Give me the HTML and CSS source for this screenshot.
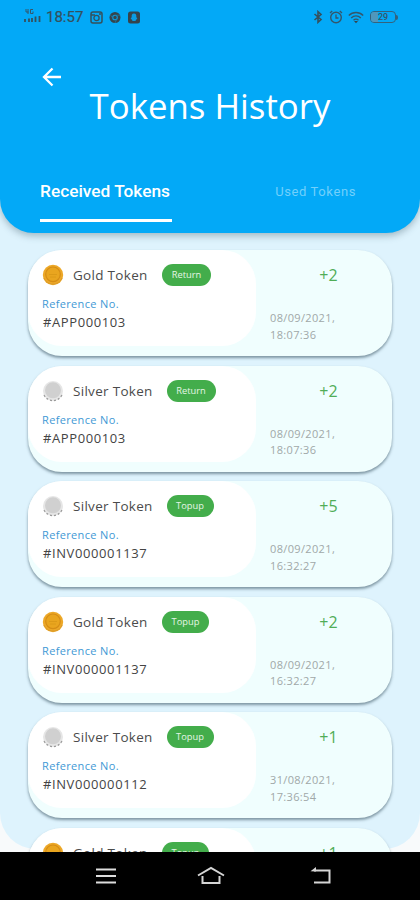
FILE: index.html
```
<!DOCTYPE html>
<html lang="en">
<head>
<meta charset="utf-8">
<title>Tokens History</title>
<link rel="stylesheet" href="styles.css">
</head>
<body>
<svg width="0" height="0" class="defs">
  <symbol id="gold" viewBox="0 0 22 22"><circle cx="11" cy="11" r="10.2" fill="#eda827"/><circle cx="11" cy="10.3" r="7.3" fill="#e9a51f" stroke="#d58d16" stroke-width="1.2"/><path d="M2 14c3 8 15 8 18 0" fill="none" stroke="#d99a2b" stroke-width="1"/><path d="M7 10.5h8M8 13h6" stroke="#dc9a18"/></symbol>
  <symbol id="silver" viewBox="0 0 22 22"><circle cx="11" cy="11" r="10" fill="#e6e6e6"/><circle cx="11" cy="10.3" r="8" fill="#d0d0d0"/><path d="M2 15c4 7.500 14 7.500 18 0" fill="none" stroke="#999" stroke-width="1.200" stroke-dasharray="2 2"/></symbol>
</svg>
<div class="screen">
  <header class="header">
    <div class="status">
      <svg class="signal" width="18" height="16" viewBox="0 0 18 16"><path d="M2 1v3h2.500M4 1v5M6.500 1.500h2.500M6.500 1.500v4h2.500v-2" fill="none" stroke="#35566a"/><path d="M1 11v3M5 10.500v3.500M8 10v4M11.500 8.500V14M15.500 8v6" stroke="#35505c" stroke-width="1.800"/></svg>
      <span class="time">18:57</span>
      <svg class="s1" width="13" height="13" viewBox="0 0 13 13"><rect x="1" y="1" width="11" height="11" rx="2" fill="none" stroke="#35505c" stroke-width="1.500"/><path d="M1 4h4M9 3h2" stroke="#35505c" stroke-width="1.500"/><circle cx="6.500" cy="7" r="2.600" fill="none" stroke="#35505c" stroke-width="1.300"/></svg>
      <svg class="s2" width="12" height="13" viewBox="0 0 12 13"><circle cx="6" cy="6.500" r="5.500" fill="#35444c"/><circle cx="6" cy="6.500" r="2.300" fill="#35444c" stroke="#0a9bdf" stroke-width="1.100"/><path d="M6 4.200h5M4 7.500 1.500 4M8 7.500 6 12" stroke="#1b7ca9" stroke-width=".7"/></svg>
      <svg class="s3" width="12" height="13" viewBox="0 0 12 13"><rect y=".5" width="12" height="12" rx="2.500" fill="#35444c"/><path d="M6 2.500c-2 0-2.500 1.500-2.300 3.500L2.600 8l1.300.5L4.500 10h3l.6-1.500L9.400 8 8.300 6C8.500 4 8 2.500 6 2.500Z" fill="#0a9ce3"/></svg>
      <span class="grow"></span>
      <svg class="bt" width="10" height="14" viewBox="0 0 10 14"><path d="m1.500 4 6.500 5.500-3 2.800V1.700l3 2.800L1.500 10" fill="none" stroke="#35505c" stroke-width="1.600"/></svg>
      <svg class="alarm" width="14" height="14" viewBox="0 0 14 14"><circle cx="7" cy="7.500" r="5.300" fill="none" stroke="#35566a" stroke-width="1.400"/><path d="M7 4.500V8h2.500M1 3l2.200-2M13 3l-2.200-2" fill="none" stroke="#35566a" stroke-width="1.300"/></svg>
      <svg class="wifi" width="16" height="13" viewBox="0 0 16 13"><path d="M.8 4.500c4-4 10.400-4 14.400 0M3.200 7c2.800-2.800 6.800-2.800 9.600 0M5.500 9.300c1.500-1.400 3.500-1.400 5 0" fill="none" stroke="#35566a" stroke-width="1.400"/><path d="m6 10 2 2.300 2-2.300Z" fill="#35444c"/></svg>
      <span class="battery"><i></i><b>29</b></span><span class="nub"></span>
    </div>
    <svg class="back" width="20" height="20" viewBox="0 0 20 20"><path d="M19 10H2M10.500 1.500 2 10l8.500 8.500" fill="none" stroke="#fff" stroke-width="2.300"/></svg>
    <h1>Tokens History</h1>
    <nav class="tabs"><span class="tab active">Received Tokens</span><span class="tab idle">Used Tokens</span></nav>
  </header>
  <main class="list">
    <article class="card"><section class="info"><div class="row"><svg class="coin"><use href="#gold"/></svg><span class="name gold-name">Gold Token</span><span class="pill return">Return</span></div><div class="label">Reference No.</div><div class="ref">#APP000103</div></section><aside class="side"><div class="amount">+2</div><div class="date">08/09/2021,<br>18:07:36</div></aside></article>
    <article class="card"><section class="info"><div class="row"><svg class="coin"><use href="#silver"/></svg><span class="name">Silver Token</span><span class="pill return">Return</span></div><div class="label">Reference No.</div><div class="ref">#APP000103</div></section><aside class="side"><div class="amount">+2</div><div class="date">08/09/2021,<br>18:07:36</div></aside></article>
    <article class="card"><section class="info"><div class="row"><svg class="coin"><use href="#silver"/></svg><span class="name">Silver Token</span><span class="pill">Topup</span></div><div class="label">Reference No.</div><div class="ref">#INV000001137</div></section><aside class="side"><div class="amount">+5</div><div class="date">08/09/2021,<br>16:32:27</div></aside></article>
    <article class="card"><section class="info"><div class="row"><svg class="coin"><use href="#gold"/></svg><span class="name gold-name">Gold Token</span><span class="pill">Topup</span></div><div class="label">Reference No.</div><div class="ref">#INV000001137</div></section><aside class="side"><div class="amount">+2</div><div class="date">08/09/2021,<br>16:32:27</div></aside></article>
    <article class="card"><section class="info"><div class="row"><svg class="coin"><use href="#silver"/></svg><span class="name">Silver Token</span><span class="pill">Topup</span></div><div class="label">Reference No.</div><div class="ref">#INV000000112</div></section><aside class="side"><div class="amount">+1</div><div class="date">31/08/2021,<br>17:36:54</div></aside></article>
    <article class="card"><section class="info"><div class="row"><svg class="coin"><use href="#gold"/></svg><span class="name gold-name">Gold Token</span><span class="pill">Topup</span></div></section><aside class="side"><div class="amount">+1</div></aside></article>
  </main>
  <footer class="navbar">
    <svg width="22" height="20" viewBox="0 0 22 20"><path d="M1 3.500h20M1 10h20M1 16.500h20" stroke="#ddd" stroke-width="2.200"/></svg>
    <svg width="30" height="20" viewBox="0 0 30 20"><path d="M2 9.500 15 2l13 7.500M6.500 10v7h17v-7" fill="none" stroke="#d5d5d5" stroke-width="2"/></svg>
    <svg width="22" height="20" viewBox="0 0 22 20"><path d="M4 4.500h15.500v12H4" fill="none" stroke="#d5d5d5" stroke-width="2"/><path d="M.5 5.300 6 1v4.500Z" fill="#d5d5d5"/></svg>
  </footer>
</div>
</body>
</html>
```
FILE: styles.css
```
* { box-sizing: border-box; }
body { margin: 0; font-family: "Open Sans", "Noto Sans", sans-serif; }
.defs { display: block; }
.screen { width: 420px; height: 900px; overflow: hidden; display: flex; flex-direction: column; background: #f8fafb; }
svg { display: block; flex: none; }
.header { position: relative; z-index: 1; height: 233px; flex: none; background: #03a9f7; border-radius: 0 0 34px 34px; box-shadow: 0 3px 7px rgba(70,100,115,.4); }
.status { display: flex; align-items: center; height: 34px; padding: 0 22px 0 24px; }
.signal { margin-top: -3px; }
.time { font: 400 15px/18px Roboto, sans-serif; color: #35505c; width: 38px; margin-left: 4px; -webkit-text-stroke: .2px #35505c; }
.s1 { margin-left: 6px; }
.s2 { margin-left: 6px; }
.s3 { margin-left: 7px; }
.grow { flex: 1; }
.alarm { margin-left: 6px; }
.wifi { margin-left: 5px; }
.battery { margin-left: 6px; width: 26px; height: 12px; border: 1px solid #35627c; border-radius: 4px; display: flex; align-items: center; overflow: hidden; }
.battery i { width: 7px; height: 10px; background: #5097bc; }
.battery b { font: 500 9px/10px Roboto, sans-serif; color: #35566a; }
.nub { width: 2px; height: 5px; background: #35627c; border-radius: 0 2px 2px 0; }
.back { margin: 33px 0 0 42px; }
h1 { height: 50px; margin: -6px 0 0; font-size: 34.800px; line-height: 50px; font-weight: 400; color: #fff; text-align: center; white-space: nowrap; }
.tabs { display: flex; justify-content: space-between; margin: 49px 64px 0 40px; font-family: Roboto, sans-serif; }
.tab { height: 42px; line-height: 23px; white-space: nowrap; }
.active { width: 132px; font-size: 17.300px; font-weight: 500; color: #fff; border-bottom: 3px solid #fff; }
.idle { font-size: 13px; letter-spacing: .6px; color: #72d0fb; }
.list { height: 650px; margin-top: -34px; flex: none; background: #def3fd; border-radius: 0 0 36px 36px; padding: 51px 28px 0; display: flex; flex-direction: column; gap: 9.500px; }
.card { height: 106px; flex: none; display: flex; border-radius: 34px; background: #f0fefe; box-shadow: 0 2px 3px rgba(65,90,105,.62); }
.info { width: 228px; height: 96px; padding: 14px 0 0 14px; background: #fff; border-radius: 34px; white-space: nowrap; }
.row { display: flex; align-items: center; height: 22px; }
.coin { width: 22px; height: 22px; }
.name { width: 93.500px; margin-left: 9px; font-size: 13.500px; line-height: 22px; letter-spacing: .3px; color: #4b4b4b; }
.gold-name { width: 89px; }
.pill { width: 47px; height: 22px; border-radius: 11px; background: #43ad4b; color: #e5f6e6; text-align: center; font-size: 9.300px; line-height: 22px; }
.return { width: 49px; }
.label { margin-top: 10px; height: 16px; font-size: 11px; line-height: 16px; letter-spacing: .35px; color: #4199d5; }
.ref { height: 19px; padding-left: 1px; font-size: 13px; line-height: 20px; letter-spacing: .6px; color: #444; }
.side { flex: 1; padding: 16px 0 0 14px; }
.amount { width: 117px; height: 20px; font-size: 16px; line-height: 19px; color: #50ad57; text-align: center; }
.date { margin-top: 24px; font-size: 11px; line-height: 16.500px; letter-spacing: .35px; color: #a0a8a8; }
.navbar { position: relative; z-index: 2; margin-top: 3px; height: 48px; flex: none; background: #000; display: flex; align-items: center; justify-content: space-between; padding: 0 88px 0 95px; }
.navbar svg:nth-child(2) { margin-right: 6px; }
```
